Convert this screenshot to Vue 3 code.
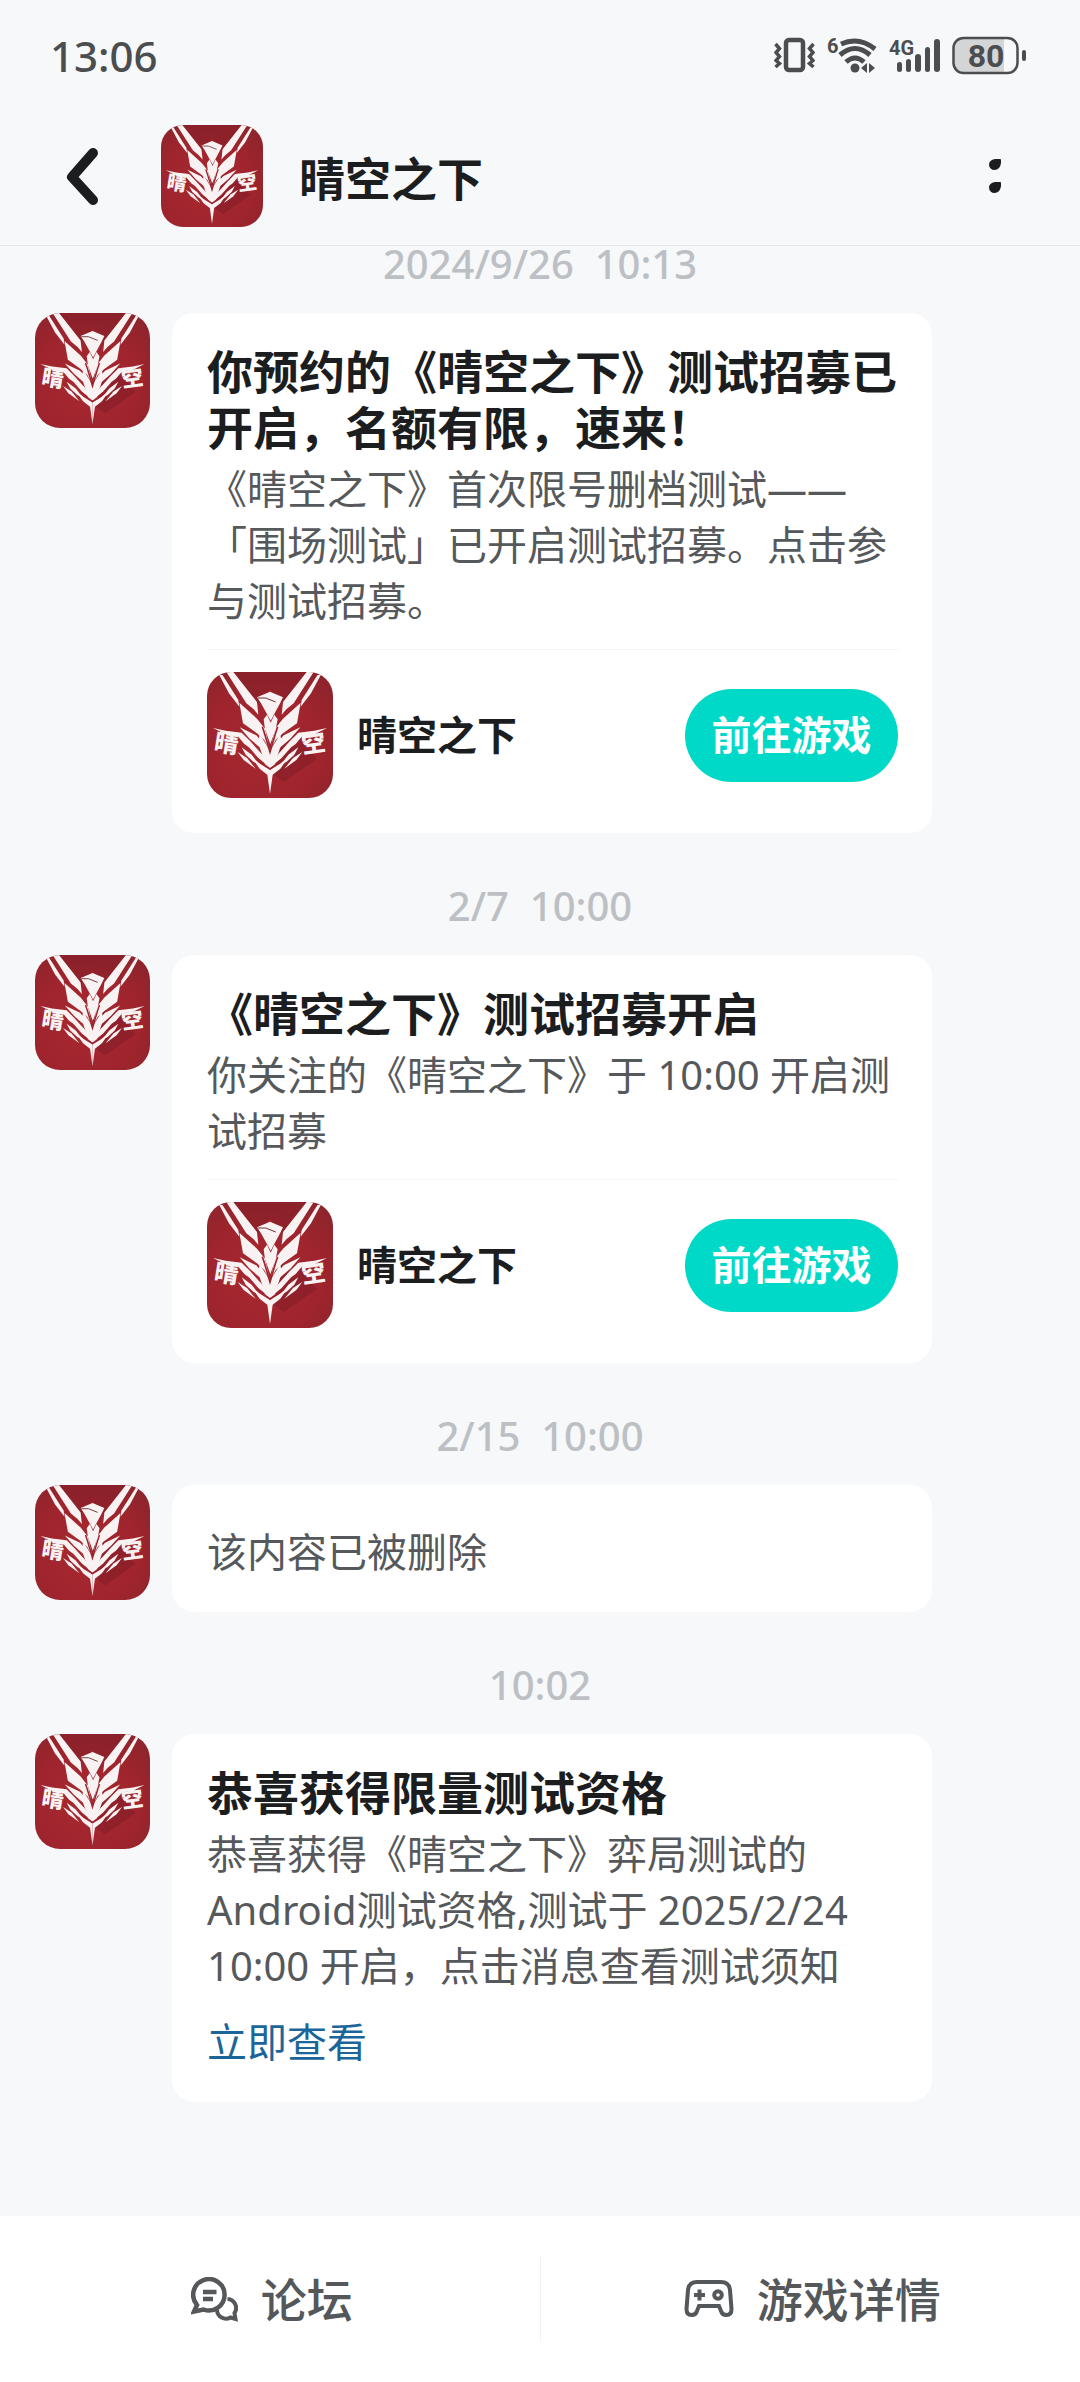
<template>
  <svg class="defs" aria-hidden="true">
    <defs>
      <radialGradient id="logo-bg" cx="45%" cy="60%" r="75%">
        <stop offset="0" stop-color="#a82932" />
        <stop offset="0.6" stop-color="#9f242d" />
        <stop offset="1" stop-color="#8c242c" />
      </radialGradient>
      <g id="logo-half">
        <path d="M35 6L47 10L94 84L97 104L66 64Z" />
        <path d="M58 0H79L150 90L154 128L140 112L118 94Z" />
        <path d="M97 92L150 140L174 170L188 234L172 204L150 184L108 154Z" />
        <path d="M18 168L56 176L104 182L130 208L164 246L176 268L140 236L112 216L92 192L54 186Z" />
        <path d="M98 166L148 190L172 218L182 246L156 224L128 200Z" />
        <path d="M126 226L160 242L174 262L176 276L154 258Z" />
        <path d="M104 226L134 248L146 264L160 278L140 270L116 248Z" />
        <path d="M92 240L120 258L146 290L110 264Z" />
        <path d="M138 262L166 280L189 294V366L181 308L158 290Z" />
      </g>
      <symbol id="game-logo" viewBox="0 0 378 378">
        <rect width="378" height="378" fill="url(#logo-bg)" />
        <path d="M70 0H310L228 100L189 50L150 100Z" fill="#86202a" opacity="0.6" />
        <path d="M189 180L270 190L330 260L230 330L189 300Z" fill="#7d1b26" opacity="0.5" />
        <g fill="#f8f3f2">
          <use href="#logo-half" />
          <use href="#logo-half" transform="translate(378 0) scale(-1 1)" />
          <path d="M150 76L189 59L228 76L220 92L191 146L162 94Z" />
          <path d="M180 128L191 152L202 128L212 142L206 172L190 216L174 172L170 142Z" />
          <path d="M158 186L189 236L220 186L224 214L206 268L204 280L189 288L174 280L172 268L154 214Z" />
          <text class="logo-text" x="22" y="240" transform="rotate(9 58 218)">晴</text>
          <text class="logo-text" x="284" y="240" transform="rotate(-8 320 218)">空</text>
        </g>
        <g fill="none" stroke="#9d222c">
          <path d="M166 164L172 182L189 240L206 182L212 164" stroke-width="5" />
          <path d="M150 260L189 291L228 260" stroke-width="4" />
          <path d="M152 78L176 78L206 90" stroke="#6d3036" stroke-width="3" />
        </g>
      </symbol>
    </defs>
  </svg>

  <div class="page">
    <header class="header">
      <div class="status-bar">
        <time class="clock">13:06</time>
        <div class="status-icons">
          <svg width="41" height="40" viewBox="0 0 41 40" fill="none" stroke="currentColor">
            <rect x="12" y="5" width="17" height="30" rx="3" stroke-width="4.500" />
            <path d="M1.500 9L5.500 13.500L2 17.500L5.500 21.500L2 25.500L5.500 28.500L1.500 32" stroke-width="3.500" />
            <path d="M39.500 9L35.500 13.500L39 17.500L35.500 21.500L39 25.500L35.500 28.500L39.500 32" stroke-width="3.500" />
          </svg>
          <svg width="50" height="40" viewBox="0 0 50 40" fill="none" stroke="currentColor">
            <text class="svg-text small" x="0" y="18">6</text>
            <path d="M14 9Q32 1 48 14" stroke-width="5" />
            <path d="M13 20Q28 7 43 20" stroke-width="5" />
            <path d="M19 27Q28 19 37 27" stroke-width="5" />
            <circle cx="28" cy="33" r="4.500" fill="currentColor" stroke="none" />
            <path d="M34 33L40 28V38ZM42 28L48 33L42 38Z" fill="currentColor" stroke="none" />
          </svg>
          <svg width="51" height="40" viewBox="0 0 51 40" fill="currentColor">
            <text class="svg-text small" x="0" y="20">4G</text>
            <rect x="8" y="27" width="5" height="10" rx="2.500" />
            <rect x="17" y="24" width="5" height="13" rx="2.500" />
            <rect x="26" y="19" width="6" height="18" rx="3" />
            <rect x="36" y="12" width="5" height="25" rx="2.500" />
            <rect x="45" y="4" width="6" height="33" rx="3" />
          </svg>
          <svg width="75" height="40" viewBox="0 0 75 40">
            <path d="M11 3H52V38H11Q2 38 2 29V12Q2 3 11 3Z" fill="#d3d5d6" />
            <rect x="1.500" y="3" width="64" height="35" rx="10" fill="none" stroke="currentColor" stroke-width="2.500" />
            <rect x="70" y="15" width="4" height="11" rx="2" fill="currentColor" />
            <text class="svg-text level" x="34" y="32" text-anchor="middle">80</text>
          </svg>
        </div>
      </div>

      <nav class="nav">
        <button class="icon-btn" type="button" aria-label="返回">
          <svg width="60" height="60" viewBox="0 0 60 60">
            <path d="M41 7L20 31L41 54" fill="none" stroke="currentColor" stroke-width="10" stroke-linecap="round" stroke-linejoin="round" />
          </svg>
        </button>
        <svg class="nav-logo"><use href="#game-logo" /></svg>
        <h1>晴空之下</h1>
        <button class="icon-btn" type="button" aria-label="更多">
          <svg width="60" height="60" viewBox="0 0 60 60" fill="currentColor">
            <path d="M30 13H35Q36 13 36 14V17Q35 24 29.500 24A5.500 5.500 0 0 1 24 18.500Q24 14 30 13Z" />
            <path d="M30 36H35Q36 36 36 37V40Q35 47 29.500 47A5.500 5.500 0 0 1 24 41.500Q24 37 30 36Z" />
          </svg>
        </button>
      </nav>
    </header>

    <main class="messages">
      <section v-for="msg in messages" :key="msg.time" class="message">
        <time class="time">{{ msg.time }}</time>
        <div class="message-row">
          <svg class="avatar"><use href="#game-logo" /></svg>
          <article class="card">
            <p v-if="msg.deleted" class="text deleted">该内容已被删除</p>
            <template v-else>
              <h2>{{ msg.title }}</h2>
              <p class="text">{{ msg.text }}</p>
            </template>
            <a v-if="msg.link" class="link" href="#">{{ msg.link }}</a>
            <div v-if="msg.game" class="game-row">
              <svg class="game-logo"><use href="#game-logo" /></svg>
              <span class="game-name">{{ msg.game }}</span>
              <button class="go-btn" type="button">前往游戏</button>
            </div>
          </article>
        </div>
      </section>
    </main>

    <footer class="footer">
      <a class="tab" href="#">
        <svg width="47" height="45" viewBox="0 0 47 45" fill="none" stroke="currentColor" stroke-width="4.500">
          <path d="M36.500 22A9 9 0 0 1 43.500 36L44.500 42L39.500 40.500A9 9 0 0 1 26 33" stroke-width="4" />
          <path d="M6 28A15.700 15.700 0 1 1 12.500 32.500L3 34.500Z" />
          <path d="M12 15H25.500M12 22H22" />
        </svg>
        <span>论坛</span>
      </a>
      <a class="tab" href="#">
        <svg width="50" height="40" viewBox="0 0 50 40" fill="none" stroke="currentColor" stroke-width="4">
          <path d="M13 3H37Q45 3 46 11L47.500 30Q47.500 36 42.500 36Q38 36 37 32L35 27H15L13 32Q12 36 7.500 36Q2.500 36 2.500 30L4 11Q5 3 13 3Z" />
          <path d="M10 16H21M15.500 10.500V21.500" />
          <circle cx="34" cy="16" r="3.800" />
        </svg>
        <span>游戏详情</span>
      </a>
    </footer>
  </div>
</template>

<script setup>
const messages = [
  {
    time: '2024/9/26  10:13',
    title: '你预约的《晴空之下》测试招募已开启，名额有限，速来！',
    text: '《晴空之下》首次限号删档测试——「围场测试」已开启测试招募。点击参与测试招募。',
    game: '晴空之下'
  },
  {
    time: '2/7  10:00',
    title: '《晴空之下》测试招募开启',
    text: '你关注的《晴空之下》于 10:00 开启测试招募',
    game: '晴空之下'
  },
  {
    time: '2/15  10:00',
    deleted: true
  },
  {
    time: '10:02',
    title: '恭喜获得限量测试资格',
    text: '恭喜获得《晴空之下》弈局测试的Android测试资格,测试于 2025/2/24 10:00 开启，点击消息查看测试须知',
    link: '立即查看'
  }
]
</script>

<style>
body {
  margin: 0;
  background: #f6f8fa;
}
</style>

<style scoped>
.defs {
  position: absolute;
  width: 0;
  height: 0;
}
.page {
  min-height: 100vh;
  display: flex;
  flex-direction: column;
  background: #f6f8fa;
  color: #1b1d1f;
  font-family: "Noto Sans", "Noto Sans CJK SC", sans-serif;
  text-spacing-trim: space-all;
}
.logo-text {
  font-family: "Noto Sans CJK SC", sans-serif;
  font-size: 72px;
  font-weight: 900;
}
h1,
h2,
p {
  margin: 0;
}
.header {
  border-bottom: 1px solid #e3e6e8;
}
.status-bar {
  box-sizing: border-box;
  height: 107px;
  padding: 3px 53px 0 50px;
  display: flex;
  align-items: center;
  justify-content: space-between;
  color: #4b4d4f;
}
.clock {
  font-size: 42px;
  font-weight: 500;
}
.status-icons {
  display: flex;
  gap: 12px;
}
.svg-text {
  font-family: Roboto, sans-serif;
  font-weight: 700;
  fill: currentColor;
  stroke: none;
}
.svg-text.small {
  font-size: 20px;
}
.svg-text.level {
  font-size: 32px;
}
.nav {
  height: 138px;
  padding: 0 55px 0 52px;
  display: flex;
  align-items: center;
}
.icon-btn {
  width: 60px;
  height: 60px;
  padding: 0;
  border: none;
  background: none;
  color: #1b1d1f;
  cursor: pointer;
}
.icon-btn svg {
  display: block;
}
.nav-logo {
  width: 102px;
  height: 102px;
  margin: 0 36px 0 49px;
  border-radius: 22px;
}
.nav h1 {
  flex: 1;
  padding-top: 4px;
  font-size: 46px;
  line-height: 56px;
  font-weight: 700;
}
.messages {
  flex: 1;
  display: flex;
  flex-direction: column;
  gap: 55px;
  padding-bottom: 48px;
}
.message {
  display: flex;
  flex-direction: column;
  gap: 34px;
}
.time {
  padding-top: 3px;
  font-size: 40px;
  line-height: 30px;
  font-weight: 500;
  text-align: center;
  white-space: pre;
  color: #bcc0c4;
}
.message-row {
  display: flex;
  align-items: flex-start;
  gap: 22px;
  padding: 0 148px 0 35px;
}
.avatar {
  width: 115px;
  height: 115px;
  flex-shrink: 0;
  border-radius: 25px;
}
.card {
  flex: 1;
  min-width: 0;
  padding: 30px 34px 32px 35px;
  border-radius: 22px;
  background: #fff;
}
.card h2 {
  margin-bottom: 6px;
  font-size: 46px;
  line-height: 56px;
  font-weight: 700;
}
.text,
.link {
  font-size: 40px;
  line-height: 56px;
  color: #56595c;
}
.deleted {
  padding-top: 9px;
}
.link {
  display: block;
  width: fit-content;
  margin-top: 20px;
  color: #1c6598;
  text-decoration: none;
}
.game-row {
  display: flex;
  align-items: center;
  margin-top: 20px;
  padding: 22px 0 3px;
  border-top: 1px solid #f4f5f6;
}
.game-logo {
  width: 126px;
  height: 126px;
  border-radius: 24px;
}
.game-name {
  flex: 1;
  margin-left: 24px;
  font-size: 40px;
  line-height: 56px;
  font-weight: 700;
}
.go-btn {
  width: 213px;
  height: 93px;
  padding: 0;
  border: none;
  border-radius: 47px;
  background: #00d9c8;
  color: #fff;
  font-family: inherit;
  font-size: 40px;
  line-height: 56px;
  font-weight: 700;
  cursor: pointer;
}
.footer {
  display: flex;
  align-items: center;
  height: 166px;
  background: #fff;
}
.tab {
  flex: 1;
  height: 84px;
  display: flex;
  align-items: center;
  justify-content: center;
  gap: 23px;
  padding-left: 4px;
  color: #54585b;
  font-size: 46px;
  line-height: 56px;
  font-weight: 500;
  text-decoration: none;
}
.tab + .tab {
  border-left: 1px solid #f0f1f2;
}
</style>
